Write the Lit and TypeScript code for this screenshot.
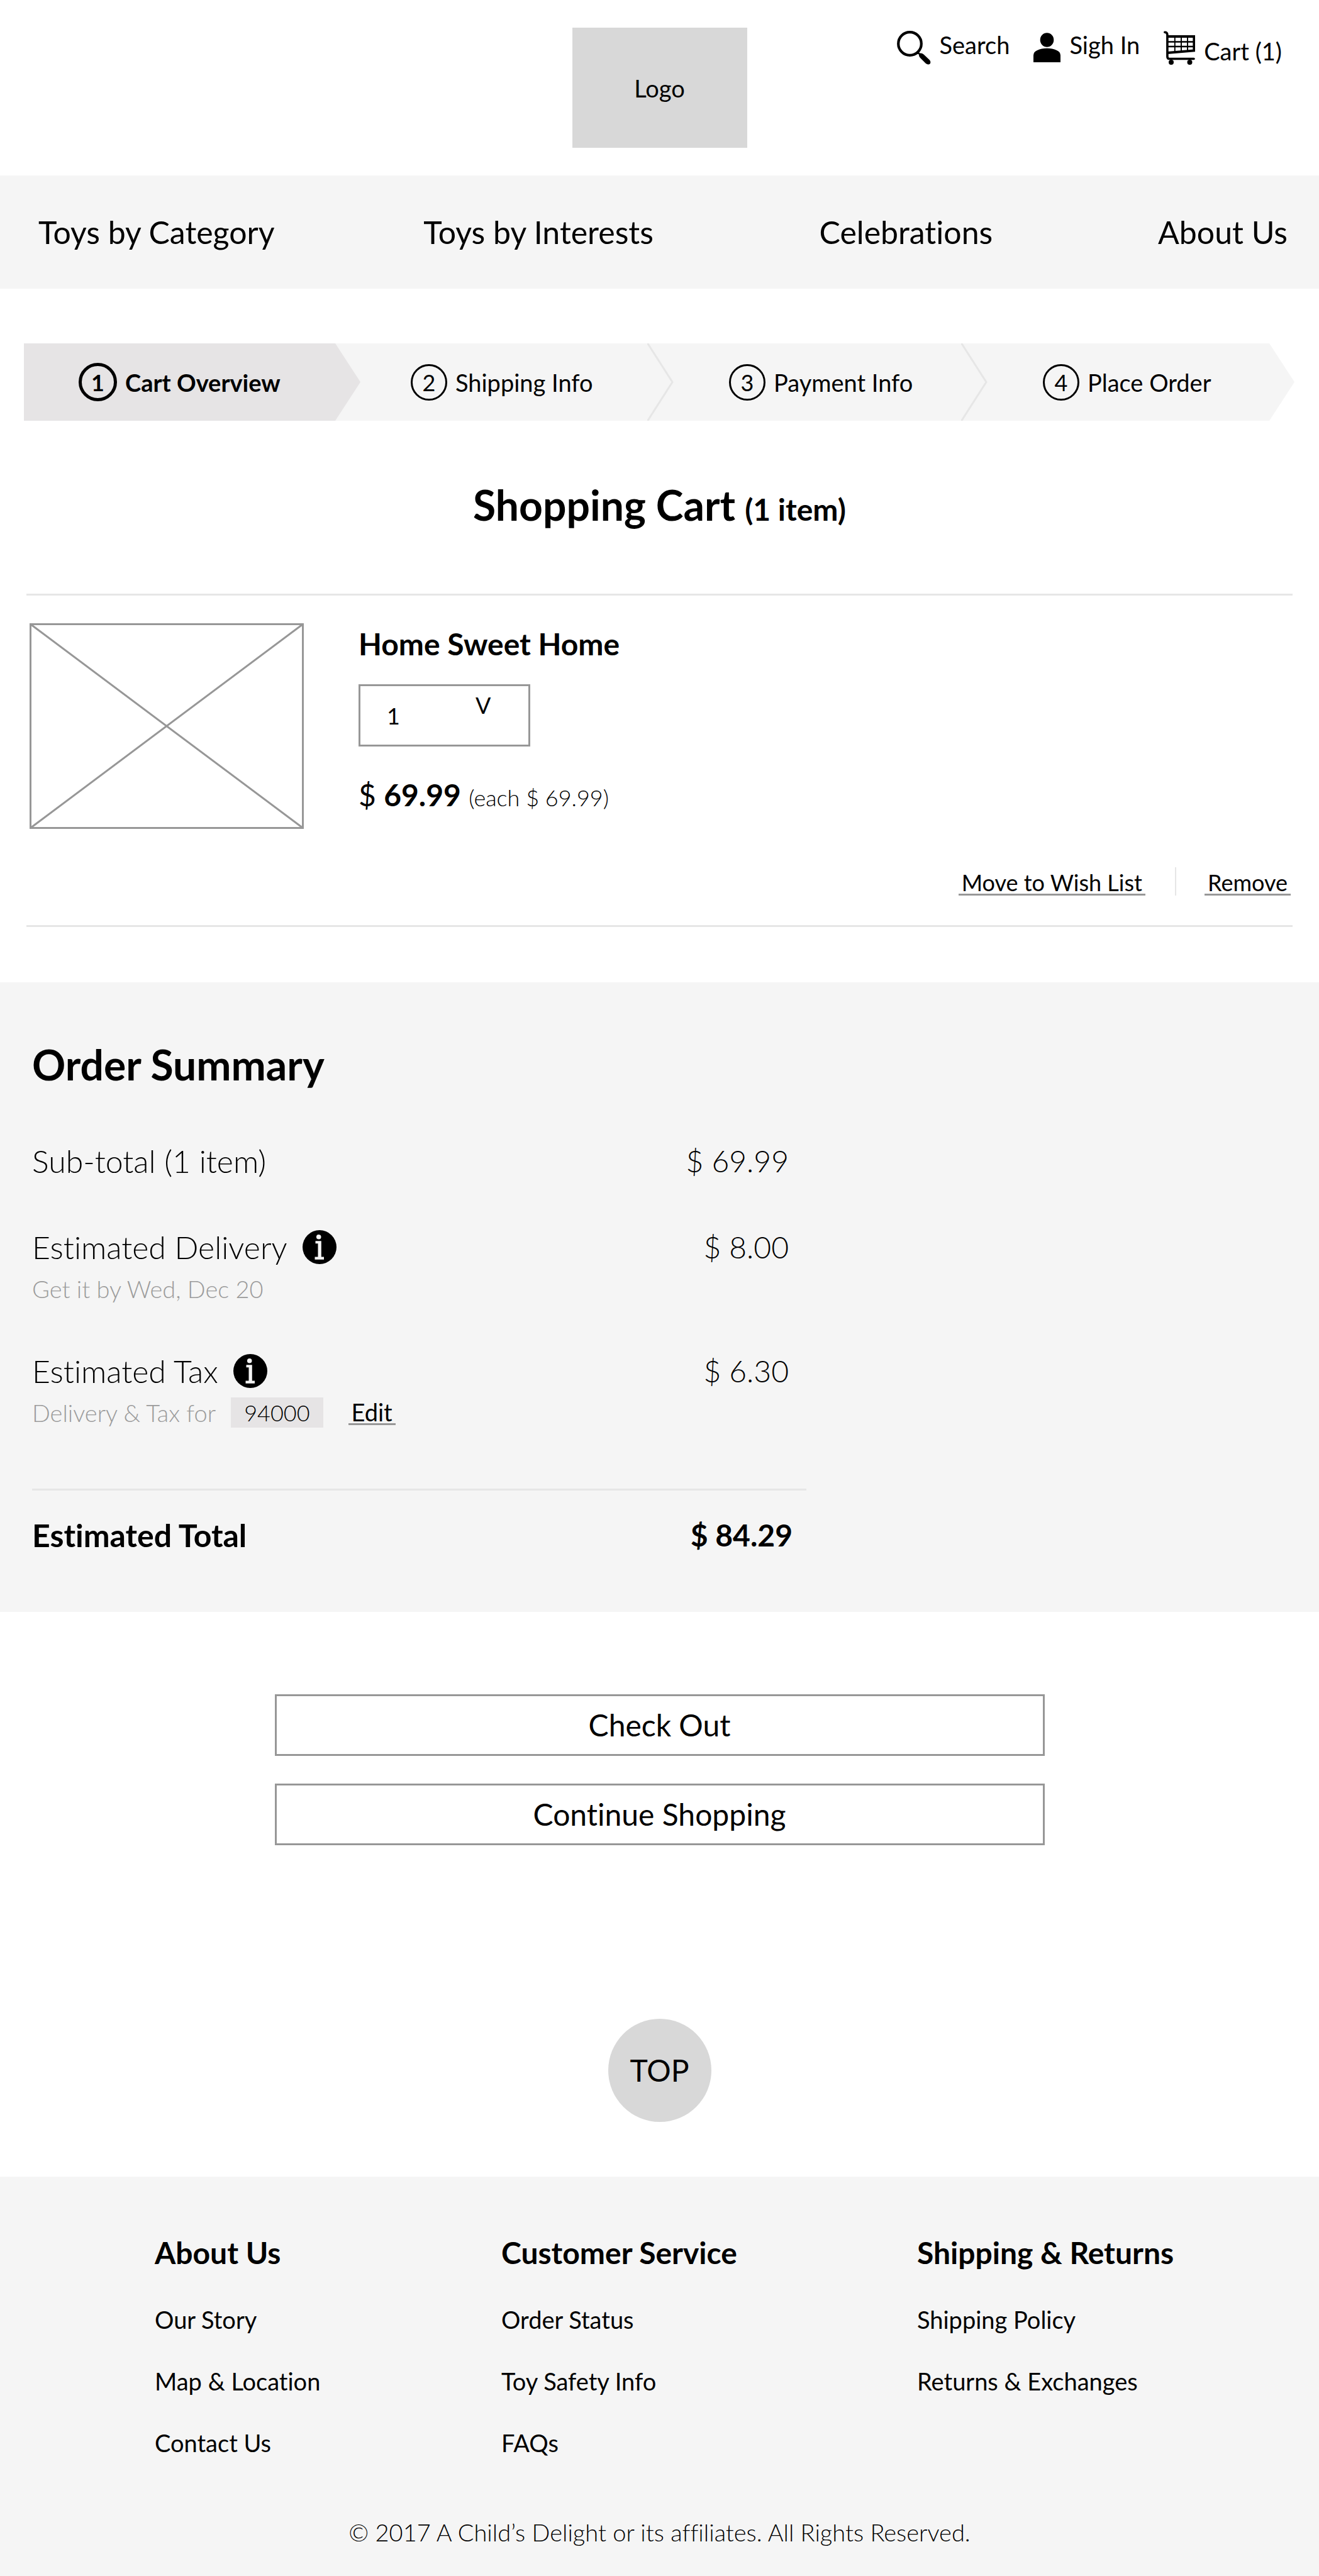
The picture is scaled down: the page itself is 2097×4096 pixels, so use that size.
import { LitElement, html, css, svg } from "lit";
import { customElement } from "lit/decorators.js";
import { classMap } from "lit/directives/class-map.js";

interface Step {
  label: string;
}

interface FooterColumn {
  title: string;
  links: string[];
}

const NAV = ["Toys by Category", "Toys by Interests", "Celebrations", "About Us"];

const STEPS: Step[] = [
  { label: "Cart Overview" },
  { label: "Shipping Info" },
  { label: "Payment Info" },
  { label: "Place Order" },
];

const FOOTER: FooterColumn[] = [
  { title: "About Us", links: ["Our Story", "Map & Location", "Contact Us"] },
  { title: "Customer Service", links: ["Order Status", "Toy Safety Info", "FAQs"] },
  { title: "Shipping & Returns", links: ["Shipping Policy", "Returns & Exchanges"] },
];

const searchIcon = html`<svg class="icon" width="54" height="54" viewBox="0 0 54 54" aria-hidden="true">
  <circle cx="20.5" cy="20.5" r="18.3" fill="none" stroke="#000" stroke-width="4.2"></circle>
  <path d="M31 36.5 L34.5 33 L36 35.5 Q40 35 42.500 37.500 L52 46.500 Q54.500 50 52.500 52.500 Q49.500 54.500 46 52 L37 43 Q34.500 40.500 35 37.500 Z" fill="#000"></path>
</svg>`;

const personIcon = html`<svg class="icon" width="43" height="54" viewBox="0 0 43 54" aria-hidden="true">
  <ellipse cx="21.500" cy="14.500" rx="10.800" ry="11.200"></ellipse>
  <path d="M0 50 V39 Q0 33.500 6 31 Q13 27.800 21.500 27.800 Q30 27.800 37 31 Q43 33.500 43 39 V50 Z"></path>
</svg>`;

const cartIcon = html`<svg class="icon" width="50" height="54" viewBox="0 0 50 54" aria-hidden="true">
  <g fill="none" stroke="#000">
    <path d="M1.800 2.300 Q5.700 2.300 5.900 6.500 V41 Q5.900 44.500 9 44.500 H48" stroke-width="3.600" stroke-linecap="round"></path>
    <path d="M6 9 H48.300 V31.500 L6 35" stroke-width="3.800"></path>
    <path d="M6 17.500 H48 M6 25 H48" stroke-width="2.400"></path>
    <path d="M17.800 9 V33 M28 9 V32.500 M38 9 V31.500" stroke-width="1.900"></path>
  </g>
  <circle cx="12" cy="50" r="4"></circle>
  <circle cx="41.500" cy="50" r="4"></circle>
</svg>`;

const infoIcon = html`<svg class="icon" width="54" height="54" viewBox="0 0 54 54" aria-hidden="true">
  <circle cx="27" cy="27" r="27"></circle>
  <g fill="#f5f5f5">
    <circle cx="25.700" cy="10.800" r="3.800"></circle>
    <path d="M20.500 17.200 H29.800 V42.500 H34 V46.800 H19.500 V42.500 H24.500 V21.200 H20.500 Z"></path>
  </g>
</svg>`;

@customElement("app-root")
export class AppRoot extends LitElement {
  static styles = css`
    :host {
      display: block;
      background: #fff;
      color: #000;
      font-family: Lato, "Open Sans", sans-serif;
      font-size: 38px;
      line-height: 44px;
      font-variant-ligatures: none;
    }
    * {
      box-sizing: border-box;
    }
    h1, h2, h3, p, ul, ol, dl, dd, dt {
      margin: 0;
      padding: 0;
      list-style: none;
      font-size: inherit;
      font-weight: inherit;
    }
    a {
      color: inherit;
      text-decoration: none;
    }
    button, select {
      font: inherit;
      color: inherit;
      margin: 0;
      padding: 0;
      border: 0;
      border-radius: 0;
      background: none;
      cursor: pointer;
    }
    .icon {
      display: block;
      flex: none;
    }
    .header {
      display: grid;
      grid-template-columns: 1fr 278px 1fr;
      padding: 44px 0;
    }
    .logo {
      grid-column: 2;
      display: flex;
      align-items: center;
      justify-content: center;
      height: 191px;
      background: #d8d8d8;
    }
    .account {
      display: flex;
      justify-content: flex-end;
      align-items: flex-start;
      gap: 38px;
      padding: 5px 59px 0 0;
    }
    .account-link {
      display: flex;
      align-items: flex-start;
      gap: 14px;
      white-space: nowrap;
    }
    .account-link.low {
      align-items: flex-end;
    }
    .nav {
      display: grid;
      grid-template-columns: 614fr 631fr 540fr auto;
      align-items: center;
      height: 180px;
      padding: 0 50px 0 61px;
      background: #f5f5f5;
      font-size: 50px;
      line-height: 60px;
      white-space: nowrap;
    }
    .steps {
      display: grid;
      grid-template-columns: 495fr 496fr 499fr 490fr;
      margin: 87px 79px 0 38px;
    }
    .step {
      position: relative;
      display: flex;
      align-items: center;
      gap: 13px;
      height: 123px;
      padding-left: 130px;
      background: #f5f5f5;
      white-space: nowrap;
    }
    .step:nth-child(2) {
      padding-left: 120px;
    }
    .step.current {
      padding-left: 87px;
      background: #e6e4e5;
      font-weight: 700;
    }
    .tip {
      position: absolute;
      left: 100%;
      top: 0;
      z-index: 1;
      fill: #f5f5f5;
    }
    .current .tip {
      fill: #e6e4e5;
    }
    .edge {
      fill: none;
      stroke: #e6e6e6;
      stroke-width: 3;
    }
    .number {
      display: flex;
      align-items: center;
      justify-content: center;
      width: 58px;
      height: 58px;
      border: 3px solid #000;
      border-radius: 50%;
      font-size: 36px;
    }
    .current .number {
      width: 61px;
      height: 61px;
      border-width: 5px;
    }
    .title {
      display: flex;
      justify-content: center;
      align-items: baseline;
      gap: 15px;
      margin: 96px 0 103px;
      font-size: 66px;
      line-height: 76px;
      font-weight: 700;
    }
    .count {
      font-size: 48px;
      line-height: 60px;
    }
    .item {
      display: grid;
      grid-template-columns: 436px 1fr;
      column-gap: 87px;
      margin: 0 42px;
      padding: 44px 3px 47px 5px;
      border: solid #e6e6e6;
      border-width: 3px 0;
    }
    .photo {
      display: block;
      width: 436px;
      height: 327px;
      fill: none;
      stroke: #979797;
      stroke-width: 3;
    }
    .details {
      padding-top: 3px;
      font-size: 48px;
      line-height: 60px;
    }
    .name {
      font-weight: 700;
    }
    .quantity {
      position: relative;
      width: 273px;
      margin: 34px 0 47px;
    }
    .select {
      display: block;
      width: 100%;
      height: 99px;
      padding: 0 0 0 42px;
      border: 3px solid #979797;
      appearance: none;
      font-size: 36px;
    }
    .arrow {
      position: absolute;
      left: 186px;
      top: 11px;
      font-size: 36px;
      line-height: 44px;
      pointer-events: none;
    }
    .each {
      font-size: 36px;
      font-weight: 300;
    }
    .actions {
      grid-column: 2;
      display: flex;
      justify-content: flex-end;
      align-items: flex-end;
      height: 45px;
      margin-top: 61px;
    }
    .underlined {
      padding: 0 5px;
      border-bottom: 3px solid #979797;
      font-size: 36px;
      line-height: 36px;
    }
    .divider {
      width: 2px;
      height: 45px;
      margin: 0 45px 0 47px;
      background: #e6e6e6;
    }
    .summary {
      margin-top: 88px;
      padding: 93px 51px 92px;
      background: #f5f5f5;
    }
    .summary-title {
      margin-bottom: 85px;
      font-size: 66px;
      line-height: 76px;
      font-weight: 700;
    }
    .lines {
      max-width: 1231px;
      font-size: 50px;
      line-height: 60px;
      font-weight: 300;
    }
    .line {
      display: grid;
      grid-template-columns: 1fr auto;
      padding-right: 28px;
      margin-bottom: 77px;
    }
    .term {
      display: flex;
      align-items: center;
      gap: 24px;
    }
    .amount {
      font-size: 48px;
    }
    .note {
      grid-column: 1 / -1;
      display: flex;
      align-items: center;
      margin-top: 12px;
      color: #9b9b9b;
      font-size: 38px;
      line-height: 48px;
    }
    .zip {
      margin: 0 40px 0 24px;
      padding: 0 21px;
      background: #e6e4e5;
      color: #000;
      font-size: 36px;
    }
    .edit {
      color: #000;
      font-size: 38px;
      font-weight: 400;
    }
    .line.total {
      margin: 97px 0 0;
      padding: 41px 22px 0 0;
      border-top: 3px solid #e6e6e6;
      font-weight: 700;
    }
    .buttons {
      display: grid;
      gap: 44px;
      max-width: 1224px;
      margin: 131px auto 0;
    }
    .button {
      height: 98px;
      border: 3px solid #979797;
      font-size: 48px;
      line-height: 60px;
    }
    .top {
      display: flex;
      align-items: center;
      justify-content: center;
      width: 164px;
      height: 164px;
      margin: 276px auto 87px;
      border-radius: 50%;
      background: #d8d8d8;
      font-size: 48px;
    }
    .footer {
      padding: 91px 0 50px;
      background: #f5f5f5;
    }
    .columns {
      display: grid;
      grid-template-columns: 551fr 661fr 639fr;
      padding-left: 246px;
      margin-bottom: 98px;
    }
    .heading {
      margin-bottom: 54px;
      font-size: 48px;
      line-height: 60px;
      font-weight: 700;
    }
    .links {
      display: grid;
      gap: 54px;
    }
    .copyright {
      text-align: center;
      font-weight: 300;
    }
  `;

  private renderStep(step: Step, index: number) {
    const current = index === 0;
    const edge = index === 1 || index === 2;
    return html`<li class=${classMap({ step: true, current })} aria-current=${current ? "step" : "false"}>
      <span class="number">${index + 1}</span>
      <span>${step.label}</span>
      <svg class="tip" width="42" height="123" viewBox="0 0 42 123" aria-hidden="true">
        <path d="M0 0 L40 61.500 L0 123 Z"></path>
        ${edge ? svg`<path class="edge" d="M0 -1 L40 61.500 L0 124"></path>` : ""}
      </svg>
    </li>`;
  }

  render() {
    return html`
      <header class="header">
        <a class="logo" href="#">Logo</a>
        <div class="account">
          <a class="account-link" href="#">${searchIcon}<span>Search</span></a>
          <a class="account-link" href="#">${personIcon}<span>Sigh In</span></a>
          <a class="account-link low" href="#">${cartIcon}<span>Cart (1)</span></a>
        </div>
      </header>
      <nav class="nav">${NAV.map((label) => html`<a href="#">${label}</a>`)}</nav>
      <main>
        <ol class="steps">${STEPS.map((step, i) => this.renderStep(step, i))}</ol>
        <h1 class="title"><span>Shopping Cart</span><span class="count">(1 item)</span></h1>
        <article class="item">
          <svg class="photo" viewBox="0 0 436 327" aria-hidden="true">
            <path d="M1.500 1.500 H434.500 V325.500 H1.500 Z M1.500 1.500 L434.500 325.500 M434.500 1.500 L1.500 325.500"></path>
          </svg>
          <div class="details">
            <h2 class="name">Home Sweet Home</h2>
            <div class="quantity">
              <select class="select" aria-label="Quantity">
                <option>1</option>
              </select>
              <span class="arrow" aria-hidden="true">V</span>
            </div>
            <p>$ <b>69.99</b> <span class="each">(each $ 69.99)</span></p>
          </div>
          <div class="actions">
            <button class="underlined" type="button">Move to Wish List</button>
            <span class="divider"></span>
            <button class="underlined" type="button">Remove</button>
          </div>
        </article>
        <section class="summary">
          <h2 class="summary-title">Order Summary</h2>
          <dl class="lines">
            <div class="line">
              <dt class="term">Sub-total (1 item)</dt>
              <dd class="amount">$ 69.99</dd>
            </div>
            <div class="line">
              <dt class="term">Estimated Delivery <button type="button" aria-label="About delivery">${infoIcon}</button></dt>
              <dd class="amount">$ 8.00</dd>
              <dd class="note">Get it by Wed, Dec 20</dd>
            </div>
            <div class="line">
              <dt class="term">Estimated Tax <button type="button" aria-label="About tax">${infoIcon}</button></dt>
              <dd class="amount">$ 6.30</dd>
              <dd class="note">
                Delivery &amp; Tax for <span class="zip">94000</span>
                <button class="underlined edit" type="button">Edit</button>
              </dd>
            </div>
            <div class="line total">
              <dt class="term">Estimated Total</dt>
              <dd class="amount">$ 84.29</dd>
            </div>
          </dl>
        </section>
        <div class="buttons">
          <button class="button" type="button">Check Out</button>
          <button class="button" type="button">Continue Shopping</button>
        </div>
        <a class="top" href="#">TOP</a>
      </main>
      <footer class="footer">
        <div class="columns">
          ${FOOTER.map(
            (column) => html`<section>
              <h3 class="heading">${column.title}</h3>
              <ul class="links">
                ${column.links.map((label) => html`<li><a href="#">${label}</a></li>`)}
              </ul>
            </section>`
          )}
        </div>
        <p class="copyright">© 2017 A Child’s Delight or its affiliates. All Rights Reserved.</p>
      </footer>
    `;
  }
}
